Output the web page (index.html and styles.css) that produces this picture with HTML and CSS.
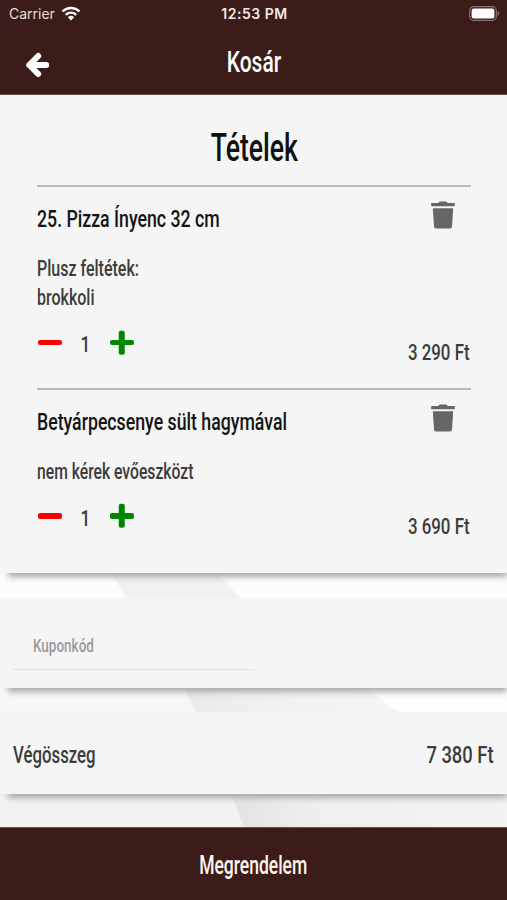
FILE: index.html
```
<!DOCTYPE html>
<html lang="hu">
<head>
  <meta charset="UTF-8">
  <meta name="viewport" content="width=device-width, initial-scale=1">
  <title>Kosár</title>
  <link rel="stylesheet" href="styles.css">
</head>
<body>
  <svg class="backdrop" viewBox="0 0 507 900" aria-hidden="true">
    <defs>
      <linearGradient id="fade">
        <stop offset="0" stop-color="#e9e9e9"/>
        <stop offset="0.5" stop-color="#f2f2f2"/>
        <stop offset="1" stop-color="#f5f5f5"/>
      </linearGradient>
      <linearGradient id="fadeLow">
        <stop offset="0" stop-color="#e2e2e2"/>
        <stop offset="0.3" stop-color="#eeeeee"/>
        <stop offset="1" stop-color="#f3f3f3"/>
      </linearGradient>
    </defs>
    <path d="M0 565h507v40H0z" fill="#fcfcfc"/>
    <path d="M106 565L131 605H247L209 565z" fill="#f1f1f1"/>
    <path d="M0 680h507v40H0z" fill="#f7f7f7"/>
    <path d="M181 680L199 720H420L360 680z" fill="url(#fade)"/>
    <path d="M507 680H360L385 703Q396 713 412 713H507z" fill="#fdfdfd"/>
    <path d="M0 785h507v45H0z" fill="#f2f2f2"/>
    <path d="M228 785L245 830H507V785z" fill="url(#fadeLow)"/>
  </svg>

  <header>
    <div class="status">
      <div class="carrier">
        <span>Carrier</span>
        <svg width="20" height="15" viewBox="0 0 20 15">
          <g fill="none" stroke="#fff" stroke-width="2.4">
            <path d="M1.5 5.4a12.2 12.2 0 0 1 17 0"/>
            <path d="M4.8 8.8a7.4 7.4 0 0 1 10.4 0"/>
          </g>
          <path d="M10 14.6L6.9 11.2a4.6 4.6 0 0 1 6.2 0z" fill="#fff"/>
        </svg>
      </div>
      <span class="clock">12:53 PM</span>
      <svg class="battery" width="31" height="15" viewBox="0 0 31 15">
        <rect x="0.7" y="0.7" width="26.6" height="13.6" rx="4" fill="none" stroke="#8a7371" stroke-width="1.2"/>
        <rect x="2.6" y="2.6" width="22.8" height="9.8" rx="2.2" fill="#fff"/>
        <path d="M28.6 5.2c2 .7 2 3.9 0 4.6z" fill="#8a7371"/>
      </svg>
    </div>
    <div class="navbar">
      <svg class="back" width="24" height="26" viewBox="0 0 24 26">
        <path d="M12.2 4L3.200 13l9 9M5 13h15.200" fill="none" stroke="#fff" stroke-width="6" stroke-linecap="round" stroke-linejoin="round"/>
      </svg>
      <h1><span class="narrow t-title">Kosár</span></h1>
    </div>
  </header>

  <main>
    <section class="panel items">
      <h2><span class="narrow t-heading">Tételek</span></h2>

      <article class="item">
        <div class="item-head">
          <h3><span class="narrow t-name">25. Pizza Ínyenc 32 cm</span></h3>
          <svg class="trash" width="24" height="28" viewBox="0 0 24 28">
            <path d="M0.6 2h6.6Q8 .4 9.2.4h5.6Q16 .4 16.8 2h6.6q.4 0 .4.5v2.3q0 .4-.4.4H.6q-.4 0-.4-.4V2.500q0-.5.4-.5zM1.800 7.200h20.400L21 25.500q-.2 2-2 2H5q-1.800 0-2-2z" fill="#666"/>
          </svg>
        </div>
        <p><span class="narrow t-note">Plusz feltétek:</span></p>
        <p><span class="narrow t-note">brokkoli</span></p>
        <div class="item-foot">
          <div class="qty">
            <span class="minus"></span>
            <span class="narrow t-qty">1</span>
            <span class="plus"></span>
          </div>
          <div class="price"><span class="narrow t-price">3 290 Ft</span></div>
        </div>
      </article>

      <article class="item">
        <div class="item-head">
          <h3><span class="narrow t-name">Betyárpecsenye sült hagymával</span></h3>
          <svg class="trash" width="24" height="28" viewBox="0 0 24 28">
            <path d="M0.6 2h6.6Q8 .4 9.2.4h5.6Q16 .4 16.8 2h6.6q.4 0 .4.5v2.3q0 .4-.4.4H.6q-.4 0-.4-.4V2.500q0-.5.4-.5zM1.800 7.200h20.400L21 25.500q-.2 2-2 2H5q-1.800 0-2-2z" fill="#666"/>
          </svg>
        </div>
        <p><span class="narrow t-note t-remark">nem kérek evőeszközt</span></p>
        <div class="item-foot">
          <div class="qty">
            <span class="minus"></span>
            <span class="narrow t-qty">1</span>
            <span class="plus"></span>
          </div>
          <div class="price"><span class="narrow t-price">3 690 Ft</span></div>
        </div>
      </article>
    </section>

    <section class="panel coupon">
      <div class="field"><span class="narrow t-coupon">Kuponkód</span></div>
    </section>

    <section class="panel total">
      <span class="narrow t-total">Végösszeg</span>
      <span class="narrow t-sum">7 380 Ft</span>
    </section>
  </main>

  <footer><span class="narrow t-order">Megrendelem</span></footer>
</body>
</html>
```
FILE: styles.css
```
* {
  box-sizing: border-box;
}
body {
  margin: 0;
  width: 507px;
  height: 900px;
  overflow: hidden;
  display: flex;
  flex-direction: column;
  background-color: #f5f5f5;
  color: #3c3c3c;
  font-family: Roboto, "Liberation Sans", sans-serif;
}
h1, h2, h3, p {
  margin: 0;
  font-weight: 500;
}
.backdrop {
  position: absolute;
  top: 0;
  left: 0;
  width: 507px;
  height: 900px;
  z-index: -1;
}

/* condensed lettering, --w is the horizontal squeeze */
.narrow {
  display: inline-block;
  white-space: nowrap;
  font-weight: 460;
  transform: scaleX(var(--w, 0.7));
  transform-origin: left;
}
.t-title, .t-heading, .t-order {
  transform-origin: center;
}
.t-price, .t-sum {
  transform-origin: right;
}
.t-title { --w: 0.7; font-size: 30px; font-weight: 500; }
.t-heading { --w: 0.7; font-size: 38px; font-weight: 500; }
.t-name { --w: 0.738; font-size: 24px; font-weight: 500; }
.t-note { --w: 0.745; font-size: 21.5px; }
.t-remark { --w: 0.73; }
.t-qty { --w: 0.8; font-size: 21.5px; }
.t-price { --w: 0.785; font-size: 21.5px; }
.t-coupon { --w: 0.71; font-size: 19px; font-weight: 500; }
.t-total { --w: 0.685; font-size: 24.5px; }
.t-sum { --w: 0.75; font-size: 24.5px; }
.t-order { --w: 0.7; font-size: 25px; font-weight: 500; }

header {
  height: 95px;
  flex: none;
  background-color: #3b1c19;
  border-bottom: 1px solid #694f4c;
  color: #fff;
}
.status {
  display: grid;
  grid-template-columns: 1fr auto 1fr;
  align-items: center;
  height: 27px;
  padding: 0 7px 0 9px;
  font-family: Inter, "Liberation Sans", sans-serif;
  font-size: 14px;
}
.carrier {
  display: flex;
  align-items: center;
  gap: 6px;
  color: #e5dedd;
}
.clock {
  font-weight: 600;
  letter-spacing: 0.5px;
  color: #f3e9e6;
}
.battery {
  justify-self: end;
}
.navbar {
  display: grid;
  grid-template-columns: 70px 1fr 70px;
  align-items: center;
  height: 67px;
}
.back {
  margin: 6px 0 0 26px;
}
.navbar h1 {
  text-align: center;
  line-height: 69px;
}

.panel {
  background-color: #f5f5f5;
  box-shadow: 4px 8px 6px -4px #aaa;
}
.items {
  height: 478px;
  padding: 29px 36px 0 37px;
}
.items h2 {
  height: 61px;
  line-height: 48px;
  text-align: center;
  color: #111;
}
.item {
  border-top: 2px solid #b9b9b9;
  padding-top: 14px;
}
.item-head {
  display: flex;
  justify-content: space-between;
  height: 53px;
}
.item-head h3 {
  line-height: 37px;
  color: #141414;
}
.trash {
  margin-right: 16px;
}
.item p {
  height: 29px;
  line-height: 29px;
}
.item-foot {
  display: flex;
  justify-content: space-between;
  height: 75.500px;
  padding: 16px 1px 0;
}
.qty {
  display: flex;
  align-items: center;
  gap: 17px;
  height: 29px;
}
.t-qty {
  padding: 4px 0 0 2px;
}
.minus, .plus {
  display: block;
  width: 24px;
  height: 5.500px;
  border-radius: 2px;
  background-color: #f80000;
}
.plus {
  background-color: #008600;
}
.plus::after {
  content: "";
  display: block;
  width: 24px;
  height: 5.500px;
  border-radius: 2px;
  background-color: #008600;
  transform: rotate(90deg);
}
.price {
  line-height: 49px;
}

.coupon {
  height: 90px;
  margin-top: 25px;
  padding: 31px 13px 0;
}
.field {
  width: 241px;
  height: 41px;
  padding-left: 20px;
  line-height: 34px;
  color: #999;
  border-bottom: 1px solid #e2e2e2;
}
.total {
  display: flex;
  justify-content: space-between;
  align-items: center;
  height: 82px;
  margin-top: 24px;
  padding: 2px 13px 0;
}

footer {
  height: 73px;
  flex: none;
  margin-top: 33px;
  line-height: 75px;
  text-align: center;
  background-color: #3b1c19;
  border-top: 1px solid #694f4c;
  color: #fff4ee;
}
```
